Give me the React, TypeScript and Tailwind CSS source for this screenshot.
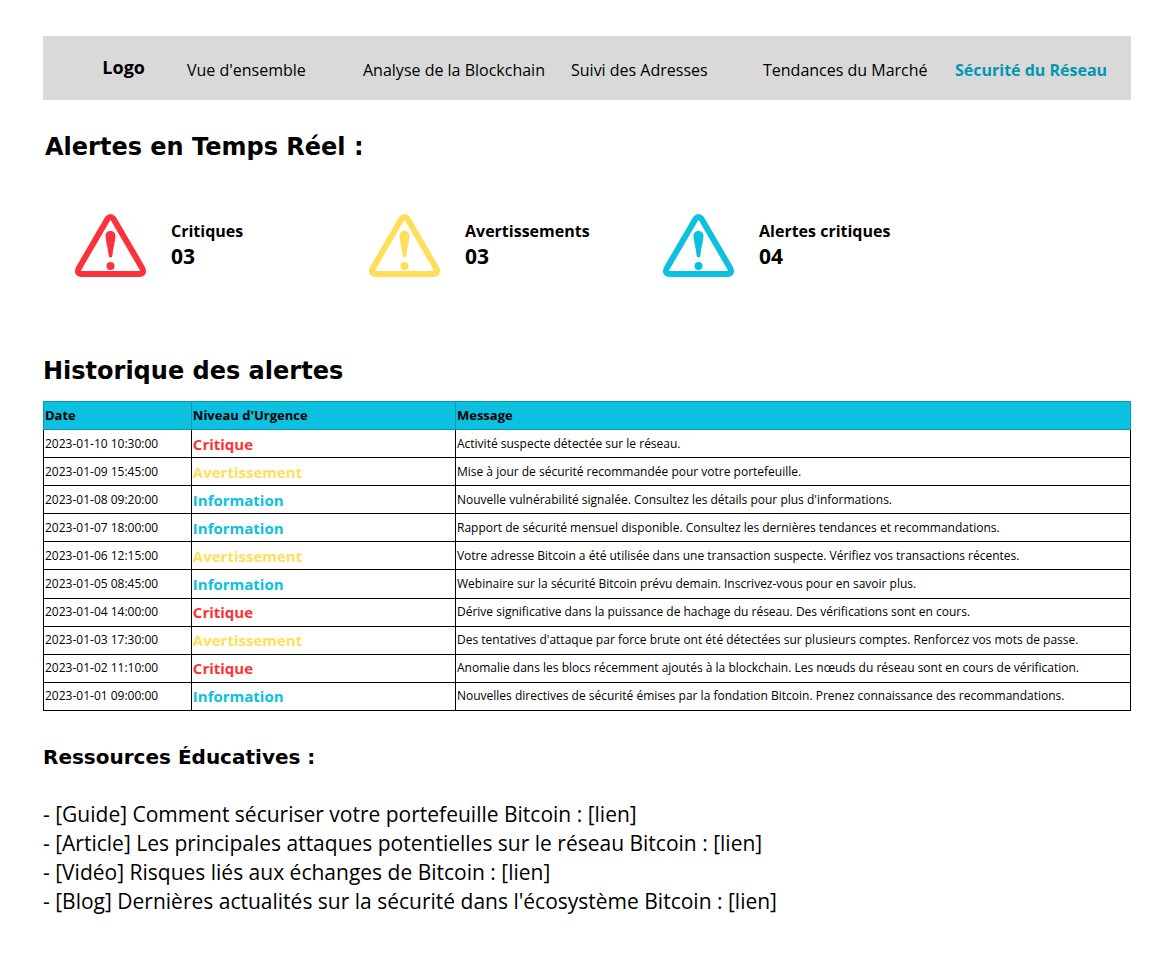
const navItems = [
  { label: "Vue d'ensemble", active: false },
  { label: 'Analyse de la Blockchain', active: false },
  { label: 'Suivi des Adresses', active: false },
  { label: 'Tendances du Marché', active: false },
  { label: 'Sécurité du Réseau', active: true },
];

const stats = [
  { label: 'Critiques', value: '03', color: 'text-[#fb323c]' },
  { label: 'Avertissements', value: '03', color: 'text-[#ffde59]' },
  { label: 'Alertes critiques', value: '04', color: 'text-[#0cc0df]' },
];

type Level = 'Critique' | 'Avertissement' | 'Information';

const levelColors: Record<Level, string> = {
  Critique: 'text-[#ff3131]',
  Avertissement: 'text-[#ffde59]',
  Information: 'text-[#0cc0df]',
};

const alerts: { date: string; level: Level; message: string }[] = [
  { date: '2023-01-10 10:30:00', level: 'Critique', message: 'Activité suspecte détectée sur le réseau.' },
  { date: '2023-01-09 15:45:00', level: 'Avertissement', message: 'Mise à jour de sécurité recommandée pour votre portefeuille.' },
  { date: '2023-01-08 09:20:00', level: 'Information', message: "Nouvelle vulnérabilité signalée. Consultez les détails pour plus d'informations." },
  { date: '2023-01-07 18:00:00', level: 'Information', message: 'Rapport de sécurité mensuel disponible. Consultez les dernières tendances et recommandations.' },
  { date: '2023-01-06 12:15:00', level: 'Avertissement', message: 'Votre adresse Bitcoin a été utilisée dans une transaction suspecte. Vérifiez vos transactions récentes.' },
  { date: '2023-01-05 08:45:00', level: 'Information', message: 'Webinaire sur la sécurité Bitcoin prévu demain. Inscrivez-vous pour en savoir plus.' },
  { date: '2023-01-04 14:00:00', level: 'Critique', message: 'Dérive significative dans la puissance de hachage du réseau. Des vérifications sont en cours.' },
  { date: '2023-01-03 17:30:00', level: 'Avertissement', message: "Des tentatives d'attaque par force brute ont été détectées sur plusieurs comptes. Renforcez vos mots de passe." },
  { date: '2023-01-02 11:10:00', level: 'Critique', message: 'Anomalie dans les blocs récemment ajoutés à la blockchain. Les nœuds du réseau sont en cours de vérification.' },
  { date: '2023-01-01 09:00:00', level: 'Information', message: 'Nouvelles directives de sécurité émises par la fondation Bitcoin. Prenez connaissance des recommandations.' },
];

const resources = [
  '[Guide] Comment sécuriser votre portefeuille Bitcoin :',
  '[Article] Les principales attaques potentielles sur le réseau Bitcoin :',
  '[Vidéo] Risques liés aux échanges de Bitcoin :',
  "[Blog] Dernières actualités sur la sécurité dans l'écosystème Bitcoin :",
];

function WarningIcon({ color }: { color: string }) {
  return (
    <svg viewBox="0 0 71 63" className={`h-[63px] w-[71px] shrink-0 ${color}`} aria-hidden="true">
      <path
        d="M32.6 4.7 3.8 54.2Q1.2 60 7 60H64Q69.8 60 67.2 54.2L38.4 4.7Q35.5 1.3 32.6 4.7Z"
        fill="none"
        stroke="currentColor"
        strokeWidth="6"
        strokeLinejoin="round"
      />
      <path
        d="M30.5 22.3C30.3 19.2 32.5 17 35.5 17S40.7 19.2 40.5 22.3C40.2 28 38 34 37.4 41.5Q37.2 43.5 35.5 43.5T33.6 41.5C33 34 30.8 28 30.5 22.3Z"
        fill="currentColor"
      />
      <circle cx="35.5" cy="52" r="4" fill="currentColor" />
    </svg>
  );
}

export default function App() {
  return (
    <div className="bg-white px-[27px] py-9 pl-[43px] font-['Open_Sans',sans-serif] text-black">
      <header className="grid h-16 grid-cols-[144fr_944fr] items-center bg-[#d9d9d9]">
        <a href="#" className="justify-self-end pr-[42px] pb-0.5 text-lg font-bold">
          Logo
        </a>
        <nav className="grid grid-cols-[176fr_208fr_192fr_192fr_176fr] pt-1 text-base whitespace-nowrap">
          {navItems.map((item) => (
            <a key={item.label} href="#" className={item.active ? 'font-bold text-[#0097b2]' : ''}>
              {item.label}
            </a>
          ))}
        </nav>
      </header>

      <main>
        <section className="pt-[29px]">
          <h1 className="pl-0.5 font-['DejaVu_Sans',sans-serif] text-2xl leading-9 font-bold">Alertes en Temps Réel :</h1>
          <div className="mt-[49px] flex flex-wrap pl-8">
            {stats.map((stat) => (
              <div key={stat.label} className="flex w-[294px] gap-[25px]">
                <WarningIcon color={stat.color} />
                <div className="pt-1 font-bold whitespace-nowrap">
                  <p className="text-base leading-[26px]">{stat.label}</p>
                  <p className="text-[21px] leading-6">{stat.value}</p>
                </div>
              </div>
            ))}
          </div>
        </section>

        <section className="pt-19">
          <h2 className="font-['DejaVu_Sans',sans-serif] text-2xl leading-9 font-bold">Historique des alertes</h2>
          <table className="mt-3 h-[310px] w-full table-fixed border-collapse text-left text-xs">
            <colgroup>
              <col className="w-[13.6%]" />
              <col className="w-[24.3%]" />
              <col />
            </colgroup>
            <thead>
              <tr className="h-7 bg-[#0cc0df] text-[13px]">
                {['Date', "Niveau d'Urgence", 'Message'].map((heading) => (
                  <th key={heading} scope="col" className="border border-[#0998b1] px-px py-0 font-bold">
                    {heading}
                  </th>
                ))}
              </tr>
            </thead>
            <tbody>
              {alerts.map((alert) => (
                <tr key={alert.date}>
                  <td className="border border-black px-px py-0">{alert.date}</td>
                  <td className={`border border-black px-px py-0 text-[15px] leading-5 font-bold ${levelColors[alert.level]}`}>
                    {alert.level}
                  </td>
                  <td className="border border-black px-px py-0">{alert.message}</td>
                </tr>
              ))}
            </tbody>
          </table>
        </section>

        <section className="pt-[30px]">
          <h2 className="font-['DejaVu_Sans',sans-serif] text-xl leading-8 font-bold">Ressources Éducatives :</h2>
          <ul className="mt-[27px] text-[21px] leading-[29px]">
            {resources.map((resource) => (
              <li key={resource}>
                - {resource} <a href="#">[lien]</a>
              </li>
            ))}
          </ul>
        </section>
      </main>
    </div>
  );
}
